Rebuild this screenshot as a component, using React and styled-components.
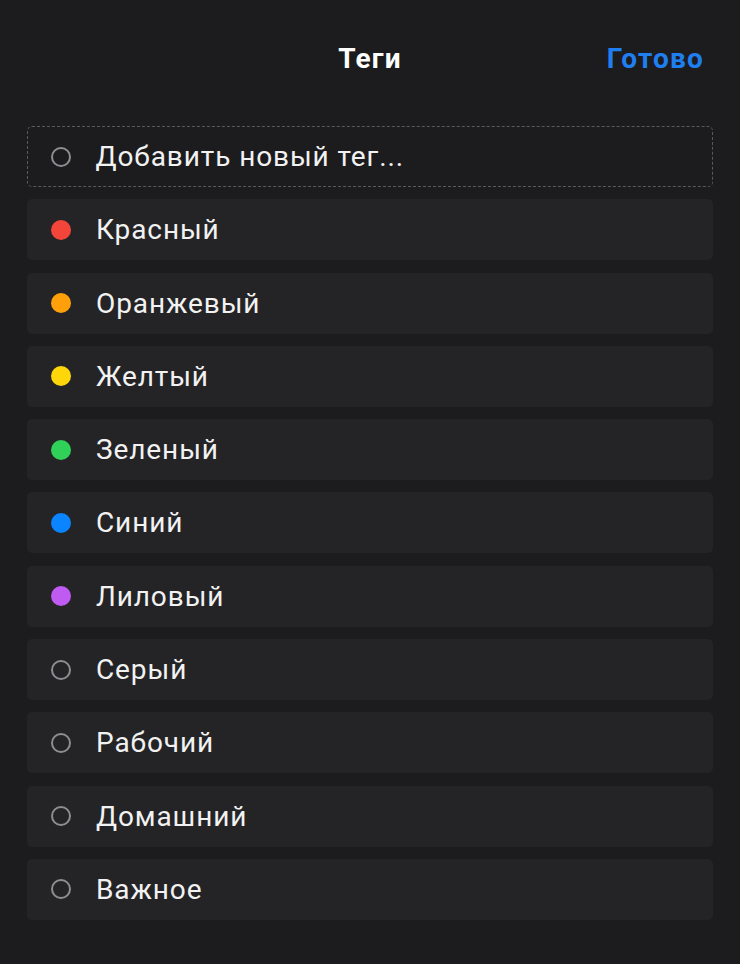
import React from "react";
import styled, { createGlobalStyle } from "styled-components";

const GlobalStyle = createGlobalStyle`
  html, body {
    margin: 0;
    padding: 0;
    background: #1c1c1e;
  }
  body {
    font-family: Roboto, "Noto Sans", sans-serif;
    -webkit-font-smoothing: antialiased;
  }
`;

const tags = [
  { name: "Красный", color: "#f4453a" },
  { name: "Оранжевый", color: "#ff9f0a" },
  { name: "Желтый", color: "#ffd60a" },
  { name: "Зеленый", color: "#30d158" },
  { name: "Синий", color: "#0a84ff" },
  { name: "Лиловый", color: "#bf5af2" },
  { name: "Серый" },
  { name: "Рабочий" },
  { name: "Домашний" },
  { name: "Важное" },
];

function App() {
  return (
    <>
      <GlobalStyle />
      <Page>
        <Header>
          <Spacer />
          <Title>Теги</Title>
          <DoneButton>Готово</DoneButton>
        </Header>
        <List>
          <Row dashed>
            <Dot />
            <Label>Добавить новый тег...</Label>
          </Row>
          {tags.map((tag) => (
            <Row key={tag.name}>
              <Dot color={tag.color} />
              <Label>{tag.name}</Label>
            </Row>
          ))}
        </List>
      </Page>
    </>
  );
}
export default App;

const Page = styled.div`
  min-height: 964px;
  background: #1c1c1e;
  padding: 0 27px;
  box-sizing: border-box;
`;

const Header = styled.div`
  height: 126px;
  display: grid;
  grid-template-columns: 1fr auto 1fr;
  align-items: center;
  padding-bottom: 9px;
  box-sizing: border-box;
`;

const Spacer = styled.div``;

const Title = styled.div`
  color: #ffffff;
  font-size: 28px;
  font-weight: 700;
  letter-spacing: 1.2px;
`;

const DoneButton = styled.button`
  justify-self: end;
  margin-right: 9px;
  background: none;
  border: none;
  padding: 0;
  color: #1f7ff0;
  font-family: inherit;
  font-size: 28px;
  font-weight: 700;
  letter-spacing: 1.2px;
`;

const List = styled.div`
  display: flex;
  flex-direction: column;
  gap: 12.3px;
`;

const Row = styled.div`
  height: 61px;
  display: flex;
  align-items: center;
  border-radius: 5px;
  box-sizing: border-box;
  background: ${(p) => (p.dashed ? "transparent" : "#242426")};
  border: ${(p) => (p.dashed ? "1.5px dashed #5a5a5e" : "none")};
  padding-left: ${(p) => (p.dashed ? "22.5px" : "24px")};
`;

const Dot = styled.span`
  width: 20px;
  height: 20px;
  border-radius: 50%;
  box-sizing: border-box;
  flex-shrink: 0;
  background: ${(p) => p.color || "transparent"};
  border: ${(p) => (p.color ? "none" : "2px solid #8e8e92")};
`;

const Label = styled.span`
  margin-left: 25px;
  color: #f2f2f2;
  font-size: 28px;
  letter-spacing: 0.9px;
`;
